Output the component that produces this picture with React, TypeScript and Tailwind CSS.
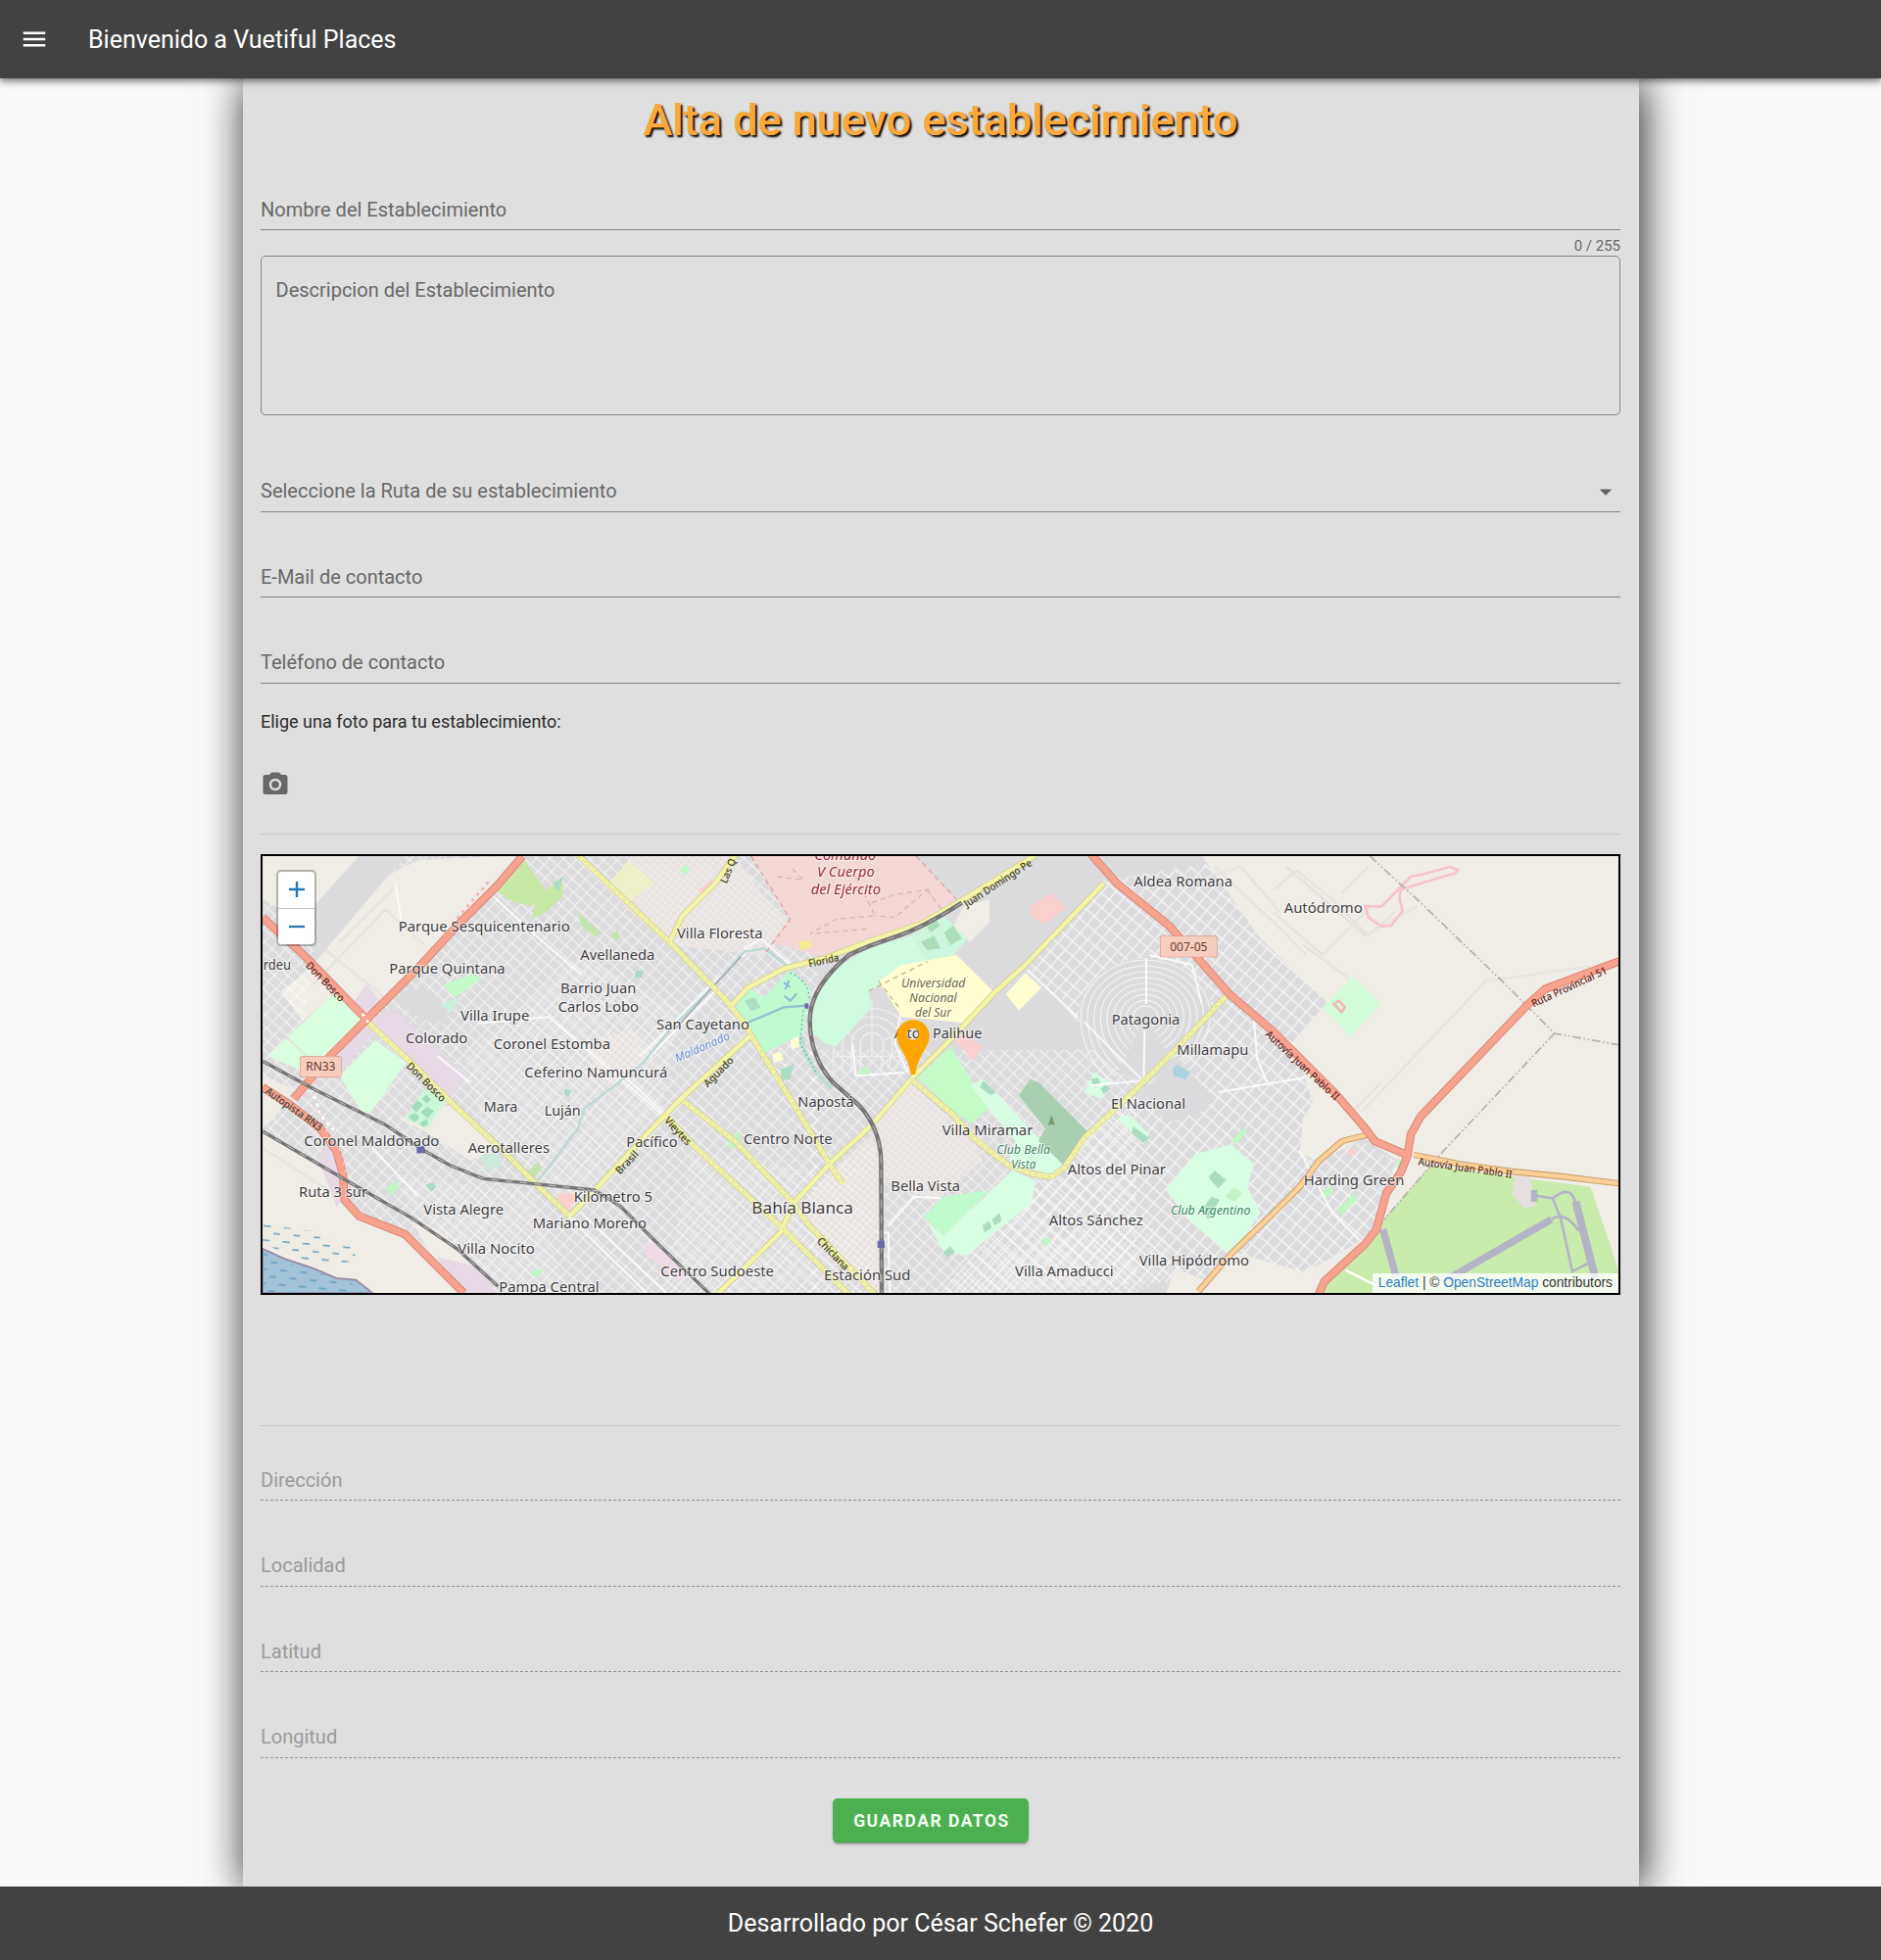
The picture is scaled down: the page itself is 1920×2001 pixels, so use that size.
import React from "react";

type Pts = string;

/* ---------- map data (three units per pixel) ---------- */

const beige: Pts[] = [
  "24,27 320,27 150,215 60,180 24,160",
  "400,90 500,40 700,30 800,27 740,120 620,240 500,370 345,525 290,470 130,310 230,250",
  "80,440 170,340 300,480 240,450 140,540",
  "24,870 280,1020 270,1090 320,1140 460,1190 560,1290 640,1365 24,1365",
  "440,830 600,790 740,920 660,960 520,870",
  "24,700 120,740 60,830 24,860",
  "480,1140 560,1170 640,1240 720,1340 640,1365 560,1290",
  "2900,27 4176,27 4176,1365 2790,1365 2820,1290 2920,1330 3000,1240 3210,1300 3330,1200 3420,1090 3500,960 3400,890 3260,960 3200,940 3210,830 3240,780 3180,600 3285,475 3080,280",
  "2170,180 2250,160 2250,230 2190,290 2140,240",
];

const pale: Pts[] = [
  "1150,27 1470,27 1560,150 1640,230 1560,330 1270,300 1130,180",
  "1000,600 1150,560 1220,640 1090,740",
  "1890,850 2010,720 2190,890 2230,960 2080,1080 1920,1020",
  "1760,1000 1890,880 1915,1000 1915,1365 1700,1180 1660,1110",
];

const areas: [string, Pts][] = [
  ["#d9fddf", "40,640 245,445 345,540 225,640 160,690"],
  ["#d9fddf", "260,700 370,590 465,660 340,830"],
  ["#e8d9e6", "340,420 385,470 345,520 300,480"],
  ["#e8d9e6", "345,540 420,490 590,650 650,690 600,770 460,650 370,560 260,690 220,650"],
  ["#dcdbdd", "450,440 520,430 590,490 590,540 520,530 440,480"],
  ["#c8e9a6", "740,135 825,40 890,130 850,180 800,170"],
  ["#c8e9a6", "860,150 940,100 945,150 890,200 850,220"],
  ["#edf0c9", "1145,40 1225,110 1145,165 1085,110"],
  ["#c4fbcb", "580,420 660,390 700,400 610,460"],
  ["#cdeedd", "570,480 630,460 600,510"],
  ["#ccf7d8", "460,830 520,740 590,770 530,860"],
  ["#e8d9e6", "210,920 270,940 290,1060 250,1100 200,970"],
  ["#e8d9e6", "560,1255 700,1290 740,1365 640,1365 570,1300"],
  ["#fcd0cf", "930,1060 990,1060 960,1115 930,1090"],
  ["#efdbe6", "1190,1215 1240,1210 1330,1310 1300,1330 1200,1250"],
  ["#f3d8d6", "1520,27 2025,27 2150,160 2035,235 1890,285 1740,335 1580,290 1640,220"],
  ["#fcd0cf", "1360,130 1400,100 1410,125 1375,150"],
  ["#c0fad1", "1470,490 1510,430 1560,460 1640,375 1700,430 1680,570 1560,630 1520,560"],
  ["#cffbe0", "1745,600 1700,560 1720,460 1780,370 1880,310 2010,270 2060,345 1940,410 1880,440 1890,490 1780,610"],
  ["#cdf6df", "2010,270 2110,210 2185,280 2130,340 2060,345"],
  ["#fefed0", "1910,410 1980,360 2150,330 2260,440 2180,540 2110,530 1980,520"],
  ["#fefed0", "2300,450 2360,385 2410,430 2340,500"],
  ["#fcd0cf", "2375,180 2440,140 2485,185 2420,235 2375,210"],
  ["#fcd0cf", "2145,590 2170,570 2230,610 2200,655"],
  ["#c4fbc8", "2030,705 2130,610 2250,800 2195,845 2140,810"],
  ["#d7fde3", "2190,730 2230,710 2400,890 2480,980 2440,1005 2310,960 2330,900"],
  ["#a9ceb0", "2340,760 2375,710 2400,720 2560,880 2480,975 2400,900 2420,860"],
  ["#c0fbcd", "2050,1130 2110,1070 2250,1050 2110,1190"],
  ["#d7fde3", "2110,1190 2320,990 2390,1020 2380,1090 2180,1250 2110,1240 2060,1150"],
  ["#d7fde3", "2540,750 2570,690 2620,720 2590,770"],
  ["#d7fde3", "2640,830 2680,820 2740,880 2720,910"],
  ["#d7fde3", "2790,1050 2880,940 2990,910 3060,970 3040,1040 3080,1120 2990,1250 2880,1160"],
  ["#a8ddbb", "2920,1010 2940,990 2975,1020 2950,1045"],
  ["#a8ddbb", "2900,1110 2930,1070 2955,1080 2920,1140"],
  ["#c4f3c8", "2970,1070 3000,1040 3025,1060 3000,1085"],
  ["#aad3e0", "2810,680 2825,665 2865,690 2850,712 2815,700"],
  ["#d2fcd9", "3270,490 3365,395 3450,480 3355,580"],
  ["#c9ebab", "3600,975 3860,1010 4090,1040 4176,1290 4176,1365 3275,1365 3290,1310 3440,1160"],
  ["#f1ede7", "4094,1040 4176,1045 4176,1300 4150,1210"],
  ["#e5e0df", "3860,1005 3905,1010 3925,1100 3885,1105 3850,1060"],
  ["#aadeb8", "2050,230 2080,215 2100,240 2070,260"],
  ["#aadeb8", "2110,260 2140,240 2165,280 2130,300"],
  ["#aadeb8", "2040,290 2080,270 2100,310 2060,315"],
  ["#a2dcc0", "480,795 500,775 515,790 495,812"],
  ["#a2dcc0", "512,770 525,758 540,772 528,785"],
  ["#a2dcc0", "470,825 490,812 505,828 490,842"],
  ["#a2dcc0", "508,812 528,795 550,808 530,830"],
  ["#a2dcc0", "505,845 525,832 532,848 515,858"],
  ["#abdcc4", "910,110 945,90 930,135"],
  ["#c2e6ae", "990,200 1060,260 1045,275 1000,240"],
  ["#c2e6ae", "1090,270 1110,255 1120,275 1105,285"],
  ["#abdcc4", "2560,710 2580,705 2590,720 2570,735"],
  ["#abdcc4", "2590,740 2605,725 2620,740 2600,755"],
  ["#abdcc4", "2690,855 2740,890 2720,905 2685,875"],
  ["#abdcc4", "2230,715 2270,750 2255,760 2220,735"],
  ["#abdcc4", "2228,1158 2250,1145 2256,1165 2235,1180"],
  ["#abdcc4", "2258,1140 2282,1120 2286,1145 2265,1158"],
  ["#c4f3c8", "1445,890 1490,870 1480,920 1450,920"],
  ["#abdcc4", "1610,680 1650,665 1640,710 1615,715"],
  ["#fefed0", "1640,590 1665,580 1668,610 1645,620"],
  ["#fefed0", "1585,635 1610,625 1620,650 1590,660"],
  ["#c0f7c5", "1850,690 1870,670 1888,685 1860,700"],
  ["#abdcc4", "1500,470 1530,460 1550,490 1520,500"],
  ["#f4ee8b", "1665,290 1700,285 1705,305 1675,315"],
  ["#cdebdd", "690,950 740,930 760,975 720,990"],
  ["#c7e3b0", "825,1000 870,965 880,985 850,1015"],
  ["#c4f3c8", "400,1045 430,1020 445,1040 420,1065"],
  ["#abdcc4", "525,1035 545,1025 557,1040 540,1055"],
  ["#c0f7c5", "845,1305 870,1290 885,1300 860,1320"],
  ["#c0f7c5", "1300,70 1320,52 1335,70 1315,83"],
  ["#c0f7c5", "3315,1110 3370,1060 3375,1080 3330,1125"],
  ["#c0f7c5", "3265,1060 3295,1035 3305,1055 3280,1075"],
  ["#c0f7c5", "2990,900 3030,860 3040,870 3005,910"],
  ["#c0f7c5", "2410,1200 2430,1195 2440,1210 2420,1222"],
  ["#fcd0cf", "3345,930 3365,920 3375,935 3355,948"],
  ["#c0f7c5", "3500,955 3520,960 3515,990 3495,980"],
  ["#abdcc4", "950,740 970,745 960,765 948,755"],
  ["#abdcc4", "1165,380 1190,375 1185,400 1165,400"],
  ["#abdcc4", "2108,1240 2130,1222 2145,1240 2122,1256"],
];

const trunk: Pts[] = [
  "24,215 150,330 345,530",
  "820,27 740,120 620,240 500,370 345,525 230,640 120,770",
  "24,735 110,790 200,860 250,930 270,1000 275,1080 320,1130 460,1185 640,1365",
  "2560,20 2640,110 2800,240 2985,450 3120,565 3310,755 3400,860 3430,900 3535,945",
  "4190,345 4040,400 3950,435 3895,485 3570,825 3540,880 3530,945 3510,995 3465,1060 3435,1170 3400,1215 3275,1330 3258,1370",
];

const orange: Pts[] = [
  "3550,942 3700,972 3850,993 4000,1008 4180,1030",
  "3410,880 3330,900 3260,960 3200,1040 3120,1120 2990,1245 2890,1360",
];

const yellow: Pts[] = [
  "345,535 470,650 600,780 750,920 860,1030 965,1130",
  "990,25 1270,290 1440,465 1500,540 1540,610 1640,770 1760,970 1800,1030",
  "1475,20 1410,110 1310,210 1270,290",
  "1520,575 1305,770 1190,890 1060,1030 965,1130",
  "1455,490 1510,430 1620,372 1760,335 1890,285 2040,235 2170,160 2390,25",
  "1255,815 1340,910 1620,1170 1780,1330 1820,1370",
  "1310,775 1470,900 1640,1080 1700,1160 1900,1370",
  "2010,710 1890,850 1760,970 1650,1090 1610,1180 1420,1365",
  "2010,710 2130,590 2270,440 2360,360 2600,110",
  "2010,710 2140,820 2200,890 2310,975 2380,1000 2440,1010 2480,980 2540,890 2680,760 2810,630 2975,455",
];

const rails: Pts[] = [
  "24,655 180,740 400,850 520,930 600,975 700,1015 850,1030 1040,1050 1120,1100 1240,1220 1395,1370",
  "24,870 280,1020 480,1135 620,1230 745,1345",
];

const mainRail =
  "M2165,170 Q2050,245 1960,275 T1820,330 Q1700,430 1700,530 Q1700,640 1770,720 L1850,790 Q1915,860 1918,960 L1920,1370";

const streets: Pts[] = [
  "730,150 860,270 1000,390",
  "430,110 450,230",
  "560,640 660,720",
  "680,540 900,520 1180,760 1260,830",
  "1130,700 1260,820 1330,890",
  "360,920 500,1070",
  "960,1130 1200,1365",
  "1000,1120 1260,1365",
  "2365,375 2520,520",
  "2540,535 2720,715",
  "2730,340 2730,480",
  "2725,560 2722,720",
  "2560,730 2720,715",
  "2950,750 3220,705",
  "3060,530 3070,650 3100,720",
  "2740,330 2870,360 2900,480",
  "1940,1160 2020,1070 2100,1075",
  "1905,1180 1940,1180 1945,1365",
  "1980,500 1960,600 2000,690",
  "1830,600 1840,700 1990,690",
  "1500,310 1550,280 1640,360",
  "1180,640 1400,420 1520,310",
  "1190,660 1420,430",
  "3200,930 3300,1120 3400,1220",
];

const outlines: Pts[] = [
  "3120,130 3190,70 3300,160 3410,270 3490,200",
  "3120,200 3270,330 3420,180",
  "3330,140 3410,60",
  "3160,60 3400,270 3560,180",
  "3210,300 3350,400",
  "3350,820 3450,720",
  "3390,810 3770,410 4090,365",
  "30,520 160,640",
  "300,110 150,260 520,560",
  "400,190 180,420",
  "430,120 260,290",
  "400,190 520,300",
  "540,650 570,625 650,700",
  "2940,60 3120,230 3220,330",
  "2880,100 3020,60 3140,200",
  "2290,720 2340,770",
  "24,920 300,1100",
  "120,800 300,860 440,900",
  "820,1180 860,1060",
];

const ringRadii = [38, 58, 78, 98, 118, 138, 158, 178, 198];

/* ---------- labels: text, left, right, baseline ---------- */

const places: [string, number, number, number][] = [
  ["Parque Sesquicentenario", 440, 965, 258],
  ["Parque Quintana", 412, 767, 388],
  ["Avellaneda", 997, 1225, 345],
  ["Barrio Juan", 936, 1168, 447],
  ["Carlos Lobo", 929, 1176, 505],
  ["Villa Irupe", 630, 841, 532],
  ["Colorado", 462, 652, 600],
  ["Coronel Estomba", 731, 1089, 619],
  ["Ceferino Namuncurá", 826, 1264, 704],
  ["Mara", 701, 805, 811],
  ["Luján", 887, 998, 821],
  ["Coronel Maldonado", 151, 565, 914],
  ["Aerotalleres", 653, 903, 936],
  ["Pacífico", 1138, 1295, 919],
  ["Ruta 3 sur", 135, 345, 1070],
  ["Kilómetro 5", 977, 1218, 1087],
  ["Vista Alegre", 517, 762, 1125],
  ["Mariano Moreno", 851, 1200, 1166],
  ["Villa Nocito", 622, 857, 1245],
  ["Pampa Central", 748, 1055, 1361],
  ["rdeu", 26, 111, 375],
  ["Villa Floresta", 1293, 1556, 278],
  ["San Cayetano", 1230, 1515, 558],
  ["Napostá", 1663, 1835, 795],
  ["Centro Norte", 1497, 1769, 910],
  ["Centro Sudoeste", 1243, 1590, 1314],
  ["Estación Sud", 1743, 2008, 1325],
  ["Bella Vista", 1948, 2160, 1053],
  ["Alto", 1958, 2038, 586],
  ["Palihue", 2076, 2227, 586],
  ["Villa Miramar", 2105, 2383, 881],
  ["Aldea Romana", 2692, 2994, 120],
  ["Autódromo", 3152, 3392, 201],
  ["Patagonia", 2624, 2833, 542],
  ["Millamapu", 2824, 3043, 635],
  ["El Nacional", 2622, 2850, 800],
  ["Altos del Pinar", 2489, 2790, 1001],
  ["Altos Sánchez", 2432, 2720, 1157],
  ["Villa Hipódromo", 2708, 3045, 1280],
  ["Villa Amaducci", 2328, 2630, 1315],
  ["Harding Green", 3212, 3520, 1035],
];

/* text, centre x, centre y, width, angle, colour */
const roadNames: [string, number, number, number, number, string][] = [
  ["Don Bosco", 216, 412, 155, 46, "#5f2419"],
  ["Don Bosco", 525, 719, 155, 45, "#45450f"],
  ["Autopista RN3", 120, 802, 205, 35, "#444"],
  ["Brasil", 1140, 965, 85, -46, "#45450f"],
  ["Vieytes", 1296, 869, 105, 47, "#45450f"],
  ["Aguado", 1420, 688, 115, -45, "#45450f"],
  ["Florida", 1742, 347, 95, -12, "#45450f"],
  ["Las Q", 1450, 72, 78, -68, "#45450f"],
  ["Juan Domingo Pe", 2276, 110, 240, -33, "#45450f"],
  ["Chiclana", 1771, 1245, 125, 46, "#45450f"],
  ["Autovía Juan Pablo II", 3208, 668, 295, 43, "#5f2419"],
  ["Autovía Juan Pablo II", 3707, 982, 290, 8, "#5b3514"],
  ["Ruta Provincial 51", 4025, 428, 250, -25, "#5f2419"],
];

/* text, left, right, baseline, colour, size */
const italics: [string, number, number, number, string, number][] = [
  ["Comando", 1714, 1903, 38, "#9b2a35", 42],
  ["V Cuerpo", 1722, 1898, 91, "#9b2a35", 42],
  ["del Ejército", 1703, 1917, 144, "#9b2a35", 42],
  ["Universidad", 1980, 2176, 429, "#6d6b35", 37],
  ["Nacional", 2005, 2150, 474, "#6d6b35", 37],
  ["del Sur", 2022, 2133, 518, "#6d6b35", 37],
  ["Club Bella", 2272, 2436, 939, "#43866a", 37],
  ["Vista", 2317, 2392, 983, "#43866a", 37],
  ["Club Argentino", 2805, 3049, 1124, "#2f8a5f", 37],
];

function Lines({ items, color, width, dash }: { items: Pts[]; color: string; width: number; dash?: string }) {
  return (
    <g fill="none" stroke={color} strokeWidth={width} strokeDasharray={dash} strokeLinejoin="round">
      {items.map((p) => (
        <polyline key={p} points={p} />
      ))}
    </g>
  );
}

function Shield({ x, y, w, h, label }: { x: number; y: number; w: number; h: number; label: string }) {
  return (
    <g>
      <rect x={x} y={y} width={w} height={h} rx="6" fill="#f7cdc0" stroke="#dc9c8c" strokeWidth="4" />
      <text x={x + w / 2} y={y + h / 2 + 13} textAnchor="middle" fontSize="36" fill="#69392e" stroke="none">
        {label}
      </text>
    </g>
  );
}

function CityMap() {
  return (
    <svg viewBox="24 27 4152 1338" preserveAspectRatio="none" className="block h-full w-full">
      <defs>
        <pattern id="grid" width="31" height="27" patternUnits="userSpaceOnUse" patternTransform="rotate(43)">
          <path d="M0 2H31M2 0V27" stroke="#fff" strokeWidth="3.4" opacity=".62" />
        </pattern>
        <pattern id="gridFine" width="17" height="17" patternUnits="userSpaceOnUse" patternTransform="rotate(40)">
          <path d="M0 1H17M1 0V17" stroke="#f7f5f3" strokeWidth="3" opacity=".6" />
        </pattern>
        <pattern id="gridEast" width="31" height="34" patternUnits="userSpaceOnUse" patternTransform="rotate(41)">
          <path d="M0 2H31M2 0V34" stroke="#fff" strokeWidth="4" opacity=".7" />
        </pattern>
        <pattern id="waves" width="62" height="44" patternUnits="userSpaceOnUse" patternTransform="rotate(5)">
          <path d="M4 8H26M36 30H56" stroke="#5f9fc4" strokeWidth="4" />
        </pattern>
      </defs>

      <rect x="24" y="27" width="4152" height="1338" fill="#dcdbdd" />
      <rect x="24" y="27" width="1700" height="1338" fill="url(#grid)" />
      <rect x="1700" y="620" width="1000" height="745" fill="url(#grid)" />
      <polygon points="2360,360 2600,100 3080,27 3300,470 3420,1300 2100,1365 2350,1080 2640,800 2700,730" fill="url(#gridEast)" />
      <g fill="#e8e3e0">
        {pale.map((p) => (
          <polygon key={p} points={p} />
        ))}
      </g>
      <g fill="url(#gridFine)">
        <polygon points="640,640 1000,330 1300,500 1250,780 960,1100 700,860" />
        <polygon points="1340,930 1750,1000 1900,900 1900,1365 1250,1365" />
        {pale.map((p) => (
          <polygon key={p} points={p} />
        ))}
        <polygon points="2300,1250 2720,1120 2860,1290 2700,1365 2200,1365" />
        <polygon points="420,1000 850,1060 960,1365 760,1365 500,1120" />
      </g>
      <g fill="#f0ece6">
        {beige.map((p) => (
          <polygon key={p} points={p} />
        ))}
      </g>
      <polygon points="3390,900 3490,960 3470,1060 3430,1180 3240,1290 3120,1200 3120,1130 3260,970" fill="#dcdbdd" />
      <polygon points="3390,900 3490,960 3470,1060 3430,1180 3240,1290 3120,1200 3120,1130 3260,970" fill="url(#gridEast)" />
      <polygon points="24,160 60,180 150,215 320,27 460,27 160,380 80,440 150,540 90,610 24,530" fill="#dcdbdd" />
      <polygon points="24,160 150,215 180,320 150,540 90,610 24,530" fill="url(#grid)" />

      {/* residential rings around Patagonia */}
      <path d="M2523,520 A205,180 0 0 1 2933,520 Q2900,640 2725,722 Q2560,660 2523,520Z" fill="#dcdbdd" />
      <g fill="none" stroke="#f4f4f5" strokeWidth="3.5">
        {ringRadii.map((r) => (
          <path
            key={r}
            d={`M${2726 - r * 0.5},${520 + r * 1.02} Q${2728 - r},${520 + r * 0.6} ${2728 - r},520 A${r},${r * 0.88} 0 0 1 ${2728 + r},520 Q${2728 + r * 0.95},${520 + r * 0.5} ${2728 + r * 0.5},${520 + r * 0.8}`}
          />
        ))}
      </g>
      <g fill="none" stroke="#efeff0" strokeWidth="4">
        {[35, 62, 90, 118].map((r) => (
          <path key={r} d={`M${1890 - r},690 V600 A${r},${r * 0.9} 0 0 1 ${1890 + r},600 Q${1890 + r},640 ${1890 + r * 0.8},680`} />
        ))}
        <path d="M1890 470V640M1780 640H1980M1790 540L1840 590M1985 560L1930 590" />
      </g>
      <polygon points="2770,700 2830,650 2940,770 2900,810 2800,840 2700,760" fill="#dcdbdd" />

      {areas.map(([fill, p], i) => (
        <polygon key={i} points={p} fill={fill} />
      ))}

      {/* estuary */}
      <polygon points="24,1155 180,1175 300,1230 310,1260 200,1285 90,1240 24,1215" fill="#efece4" />
      <polygon points="24,1155 180,1175 320,1235 290,1270 200,1285 90,1240 24,1215" fill="url(#waves)" />
      <path d="M24,1230 L90,1260 180,1290 250,1320 310,1325 360,1365H24Z" fill="#a3c3d6" stroke="#9a91ad" strokeWidth="6" />
      <path d="M24,1240 L90,1270 180,1300 290,1330 330,1365H24Z" fill="url(#waves)" />

      <Lines items={outlines} color="#d6d3cf" width={5} />
      <Lines items={outlines} color="#f6f4f0" width={2.5} />
      <Lines items={streets} color="#fafafa" width={6} />

      {/* streams */}
      <g fill="none" stroke="#bcd8d8" strokeWidth="7">
        <path d="M870 1020L990 860 1010 800 1090 740 1190 660 1270 560 1400 430 1500 320 1560 310 1640 370" />
        <path d="M1490 545L1620 490 1690 485" stroke="#95bfd3" />
        <path d="M1675 580Q1680 660 1770 740" stroke="#aadcc8" strokeWidth="14" opacity=".6" />
        <path d="M1640 385Q1700 410 1698 470M1680 500L1670 600 1720 690" stroke="#57b3a6" strokeWidth="5" strokeDasharray="4 10" />
      </g>
      <path d="M1290 555L1400 430 1490 335" fill="none" stroke="#a5a5b5" strokeWidth="4" />
      <path d="M1620 415L1640 428M1636 408L1624 436M1622 455L1640 470 1660 448" fill="none" stroke="#8fb7d8" strokeWidth="6" />

      {/* military ground tracks */}
      <g fill="none" stroke="#d8b9a4" strokeWidth="4" strokeDasharray="16 12">
        <path d="M1600 90L1680 100 1640 60M1840 90L1900 210 1780 220 1700 265 1880 250M1890 170L1960 145 2060 130 1960 215 1900 210M2060 130L2110 200" />
        <path d="M1880 440L1980 390 2060 350M1910 410L1980 500" stroke="#c9b98f" />
        <path d="M1520 27L1640 220 1560 330M2025 27L2150 160" stroke="#dda4a2" />
      </g>

      {/* airport */}
      <g fill="none" stroke="#b5b3c6">
        <path d="M3455 1170L3495 1315M3640 1330L3970 1140" strokeWidth="22" />
        <path d="M4045 1085L4105 1320" strokeWidth="24" />
        <path d="M3910 1065L3975 1075 4000 1140 4035 1300 4090 1270M3975 1075Q4030 1030 4045 1090M3970 1140Q4010 1110 4055 1175" strokeWidth="8" />
        <path d="M3918 1050V1085" strokeWidth="20" />
      </g>
      <path d="M3340 1295L3440 1345" stroke="#fff" strokeWidth="7" />

      {/* race track */}
      <path
        d="M3400 180L3450 182 3540 90 3580 82 3660 60 3685 70 3675 80 3620 95 3510 130 3505 155 3515 195 3480 240 3450 242 3410 215Z"
        fill="none"
        stroke="#f7c4cb"
        strokeWidth="8"
        strokeLinejoin="round"
      />
      <path d="M3305 480L3320 470 3338 490 3328 505Z" fill="none" stroke="#f5b9b4" strokeWidth="8" />

      {/* district limits */}
      <g fill="none" stroke="#b4b1b1" strokeWidth="5" strokeDasharray="26 8 5 8 5 8">
        <path d="M3415 27L3560 160 3820 410 3980 570 4176 605" />
        <path d="M3980 570L3640 930 3450 1150" />
      </g>

      <Lines items={orange} color="#c5975c" width={19} />
      <Lines items={orange} color="#fbd09a" width={14} />
      <Lines items={yellow} color="#c9ca85" width={18} />
      <Lines items={yellow} color="#f3f3a9" width={14} />
      <Lines items={[...yellow.slice(0, 2), yellow[5], yellow[6], yellow[9]]} color="#d0d088" width={2.5} dash="12 9" />
      <Lines items={trunk} color="#d9806b" width={25} />
      <Lines items={trunk} color="#f6a38f" width={20} />
      <g fill="none" stroke="#fff" strokeWidth="8" strokeDasharray="9 14">
        <path d="M150 760L190 710 230 640M185 780L215 860 265 930 285 1010" stroke="#f7c7cd" />
        <path d="M175 740L200 820 245 870M330 510L350 540" />
        <path d="M605 235L725 95" stroke="#f5b5a8" />
      </g>

      <Lines items={rails} color="#777575" width={10} />
      <Lines items={rails} color="#c9c7c7" width={3} dash="22 22" />
      <path d={mainRail} fill="none" stroke="#777575" strokeWidth="13" />
      <path d={mainRail} fill="none" stroke="#bdbbbb" strokeWidth="3" strokeDasharray="26 20" />
      <g fill="#6a6aa8">
        <rect x="496" y="915" width="24" height="22" />
        <rect x="1907" y="1205" width="22" height="22" />
        <rect x="1684" y="478" width="12" height="16" />
      </g>
      <path d="M2430 850L2440 820 2450 850Z" fill="#6e9f79" />

      <g fontFamily="'Noto Sans', sans-serif" paintOrder="stroke" stroke="rgba(255,255,255,.6)" strokeWidth="6" strokeLinejoin="round">
        <Shield x={140} y={641} w={124} h={62} label="RN33" />
        <Shield x={2774} y={273} w={172} h={62} label="007-05" />
        {places.map(([t, a, b, y]) => (
          <text key={t} x={a} y={y} textLength={b - a} lengthAdjust="spacingAndGlyphs" fontSize="43" fill="#424042">
            {t}
          </text>
        ))}
        <text x="1522" y="1123" textLength="311" lengthAdjust="spacingAndGlyphs" fontSize="48" fill="#424042">
          Bahía Blanca
        </text>
        {italics.map(([t, a, b, y, fill, size]) => (
          <text key={t} x={a} y={y} textLength={b - a} lengthAdjust="spacingAndGlyphs" fontSize={size} fontStyle="italic" fill={fill}>
            {t}
          </text>
        ))}
        <text x="-90" y="12" textLength="180" lengthAdjust="spacingAndGlyphs" transform="translate(1370 612) rotate(-24)" fontSize="36" fontStyle="italic" fill="#6c93d0">
          Maldonado
        </text>
        {roadNames.map(([t, x, y, w, r, fill]) => (
          <text key={t + x} x={-w / 2} y={11} textLength={w} lengthAdjust="spacingAndGlyphs" transform={`translate(${x} ${y}) rotate(${r})`} fontSize="32" fontWeight="500" fill={fill} stroke="none">
            {t}
          </text>
        ))}
      </g>

      {/* marker */}
      <path
        d="M2016 529C1988 529 1966 551 1966 579C1966 612 2003 640 2009 696H2023C2029 640 2066 612 2066 579C2066 551 2044 529 2016 529ZM2016 554A18 18 0 1 1 2016 590A18 18 0 1 1 2016 554Z"
        fill="#ffa500"
        fillRule="evenodd"
      />
    </svg>
  );
}

/* ---------- form ---------- */

function Field({ label, disabled, children }: { label: string; disabled?: boolean; children?: React.ReactNode }) {
  if (disabled) {
    return (
      <div className="flex h-[40px] flex-col justify-between text-[#9a9a9a]">
        <span className="text-[20px] leading-[38px]">{label}</span>
        <div className="h-px shrink-0 bg-[repeating-linear-gradient(90deg,#949494_0_3px,#dfdfdf_3px_5px)]" />
      </div>
    );
  }
  return (
    <div className="flex h-[40px] items-start justify-between border-b border-[#868686] text-[#686868]">
      <span className="text-[20px] leading-[38px]">{label}</span>
      {children}
    </div>
  );
}

export default function App() {
  return (
    <div className="flex h-[2001px] w-full flex-col overflow-hidden bg-[#fafafa] font-['Roboto',sans-serif]">
      <header className="relative z-10 flex h-[80px] shrink-0 items-center bg-[#424242] pl-[20px] text-white shadow-[0_2px_5px_rgba(0,0,0,0.3),0_5px_6px_rgba(0,0,0,0.14),0_1px_12px_rgba(0,0,0,0.2)]">
        <svg viewBox="0 0 24 24" className="size-[30px]" fill="currentColor">
          <path d="M3 6h18v2H3V6m0 5h18v2H3v-2m0 5h18v2H3v-2Z" />
        </svg>
        <span className="ml-[40px] pt-[2px] text-[25px] leading-[38px]">Bienvenido a Vuetiful Places</span>
      </header>

      <main className="mx-auto h-[1846px] w-[1425px] shrink-0 bg-[#dfdfdf] px-[18.5px] shadow-[3px_3px_42px_rgba(0,0,0,0.87)]">
        <h1 className="pt-[15px] text-center text-[45px] leading-[56px] font-medium text-[#f9a83b] [text-shadow:2px_2px_2px_#000]">
          Alta de nuevo establecimiento
        </h1>

        <div className="mt-[44px]">
          <Field label="Nombre del Establecimiento" />
        </div>
        <div className="mt-[7px] mb-px text-right text-[15px] leading-[18px] text-[#686868]">0 / 255</div>
        <div className="h-[163px] rounded-[5px] border border-[#868686] px-[14.5px] pt-[15px] text-[20px] leading-[38px] text-[#686868]">
          Descripcion del Establecimiento
        </div>

        <div className="mt-[58px] pb-px [&>div]:h-[41px]">
          <Field label="Seleccione la Ruta de su establecimiento">
            <svg viewBox="0 0 24 24" className="mt-[5px] size-[30px]" fill="#606060">
              <path d="M7 10l5 5 5-5H7Z" />
            </svg>
          </Field>
        </div>
        <div className="mt-[46px]">
          <Field label="E-Mail de contacto" />
        </div>
        <div className="mt-[47px] [&>div]:h-[41px]">
          <Field label="Teléfono de contacto" />
        </div>

        <p className="mt-[25px] text-[18px] leading-[28px] text-[#2b2b2b]">Elige una foto para tu establecimiento:</p>
        <svg viewBox="0 0 24 24" className="mt-[35px] size-[30px]" fill="#686868">
          <path d="M4 4h3l2-2h6l2 2h3a2 2 0 0 1 2 2v12a2 2 0 0 1-2 2H4a2 2 0 0 1-2-2V6a2 2 0 0 1 2-2m8 3a5 5 0 0 0-5 5 5 5 0 0 0 5 5 5 5 0 0 0 5-5 5 5 0 0 0-5-5m0 2a3 3 0 0 1 3 3 3 3 0 0 1-3 3 3 3 0 0 1-3-3 3 3 0 0 1 3-3Z" />
        </svg>
        <div className="mt-[35px] h-px bg-[#c8c8c8]" />

        <div className="relative mt-[20px] h-[450px] border-2 border-black">
          <CityMap />
          <div className="absolute top-[13.5px] left-[14px] flex w-[41px] flex-col rounded-[5px] border-[2.5px] border-black/25 bg-white bg-clip-padding">
            <div className="flex h-[38px] items-center justify-center border-b border-[#ccc]">
              <svg viewBox="0 0 16 16" className="size-[16px]">
                <path d="M0 8h16M8 0v16" stroke="#2179b5" strokeWidth="2.4" />
              </svg>
            </div>
            <div className="flex h-[36px] items-center justify-center">
              <svg viewBox="0 0 16 16" className="size-[16px]">
                <path d="M0 8h16" stroke="#2179b5" strokeWidth="2.2" />
              </svg>
            </div>
          </div>
          <div className="absolute right-0 bottom-0 h-[20px] bg-white/80 px-[6px] font-['Liberation_Sans',sans-serif] text-[13.75px] leading-[19px] whitespace-nowrap text-[#333]">
            <span className="text-[#2a7fc4]">Leaflet</span> | © <span className="text-[#2a7fc4]">OpenStreetMap</span> contributors
          </div>
        </div>

        <div className="mt-[133px] h-px bg-[#c4c4c4]" />

        <div className="mt-[36px] flex flex-col gap-[47px]">
          <Field label="Dirección" disabled />
          <div className="[&>div]:h-[41px]">
            <Field label="Localidad" disabled />
          </div>
          <Field label="Latitud" disabled />
          <div className="[&>div]:h-[41px]">
            <Field label="Longitud" disabled />
          </div>
        </div>

        <div className="mt-[41px] flex justify-center pr-[20px]">
          <button className="h-[45px] w-[200px] rounded-[5px] bg-[#4caf50] pt-[1px] pl-[2px] text-[17.5px] font-bold tracking-[1.5px] whitespace-nowrap text-[#f1fff0] shadow-[0_3px_2px_-2px_rgba(0,0,0,0.3),0_2px_3px_rgba(0,0,0,0.2)]">
            GUARDAR DATOS
          </button>
        </div>
      </main>

      <footer className="relative z-10 flex h-[75px] shrink-0 items-center justify-center bg-[#424242] text-[25px] text-white">
        Desarrollado por César Schefer © 2020
      </footer>
    </div>
  );
}
